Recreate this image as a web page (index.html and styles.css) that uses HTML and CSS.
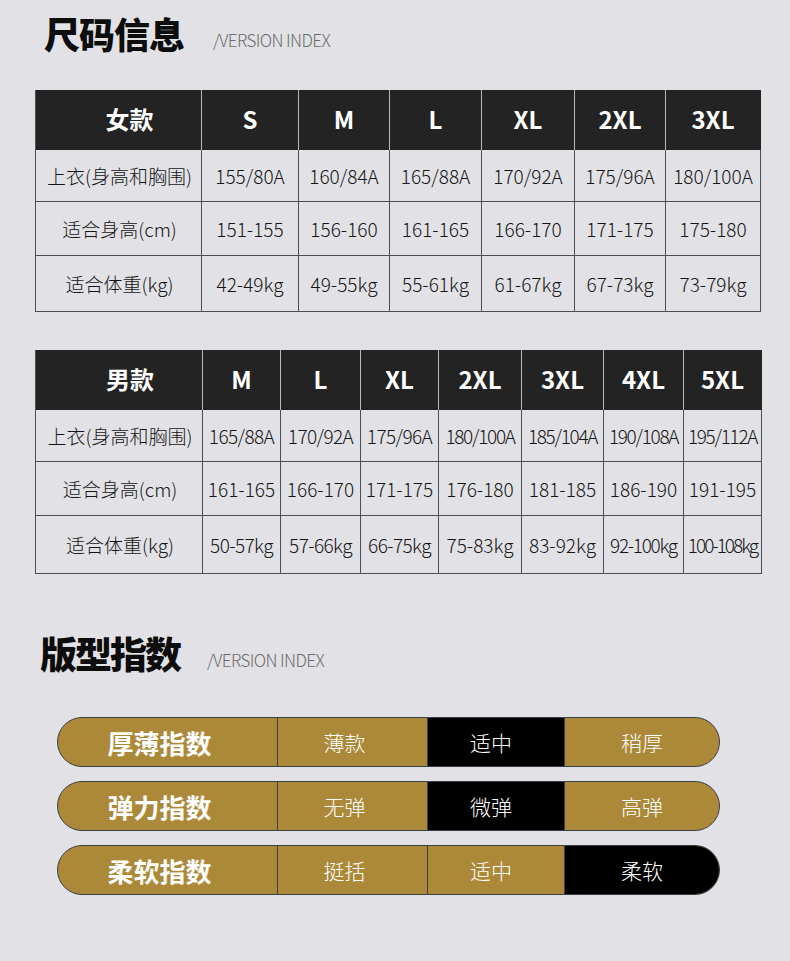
FILE: index.html
```html
<!DOCTYPE html>
<html lang="zh">
<head>
<meta charset="utf-8">
<title>尺码信息</title>
<link rel="stylesheet" href="styles.css">
</head>
<body>
<section class="head head-size">
  <h1 class="title">尺码信息</h1>
  <span class="sub">/VERSION INDEX</span>
</section>

<table class="size women">
  <colgroup>
    <col class="w-label"><col class="w97"><col class="w91"><col class="w92"><col class="w93"><col class="w91"><col class="w95">
  </colgroup>
  <thead>
    <tr><th>女款</th><th>S</th><th>M</th><th>L</th><th>XL</th><th>2XL</th><th>3XL</th></tr>
  </thead>
  <tbody>
    <tr class="r1"><td>上衣(身高和胸围)</td><td>155/80A</td><td>160/84A</td><td>165/88A</td><td>170/92A</td><td>175/96A</td><td>180/100A</td></tr>
    <tr class="r2"><td>适合身高(cm)</td><td>151-155</td><td>156-160</td><td>161-165</td><td>166-170</td><td>171-175</td><td>175-180</td></tr>
    <tr class="r3"><td>适合体重(kg)</td><td>42-49kg</td><td>49-55kg</td><td>55-61kg</td><td>61-67kg</td><td>67-73kg</td><td>73-79kg</td></tr>
  </tbody>
</table>

<table class="size men">
  <colgroup>
    <col class="w-label2"><col class="w78"><col class="w80"><col class="w78"><col class="w83"><col class="w82"><col class="w80"><col class="w78">
  </colgroup>
  <thead>
    <tr><th>男款</th><th>M</th><th>L</th><th>XL</th><th>2XL</th><th>3XL</th><th>4XL</th><th>5XL</th></tr>
  </thead>
  <tbody>
    <tr class="r1"><td>上衣(身高和胸围)</td><td class="t1">165/88A</td><td class="t1">170/92A</td><td class="t1">175/96A</td><td class="t2">180/100A</td><td class="t2">185/104A</td><td class="t2">190/108A</td><td class="t2">195/112A</td></tr>
    <tr class="r2"><td>适合身高(cm)</td><td>161-165</td><td>166-170</td><td>171-175</td><td>176-180</td><td>181-185</td><td>186-190</td><td>191-195</td></tr>
    <tr class="r3"><td>适合体重(kg)</td><td class="t1">50-57kg</td><td class="t1">57-66kg</td><td class="t1">66-75kg</td><td>75-83kg</td><td>83-92kg</td><td class="t2">92-100kg</td><td class="t3">100-108kg</td></tr>
  </tbody>
</table>

<section class="head head-fit">
  <h1 class="title">版型指数</h1>
  <span class="sub">/VERSION INDEX</span>
</section>

<div class="pills">
  <div class="pill">
    <div class="seg lab">厚薄指数</div>
    <div class="seg o1">薄款</div>
    <div class="seg o2 on">适中</div>
    <div class="seg o3">稍厚</div>
  </div>
  <div class="pill">
    <div class="seg lab">弹力指数</div>
    <div class="seg o1">无弹</div>
    <div class="seg o2 on">微弹</div>
    <div class="seg o3">高弹</div>
  </div>
  <div class="pill">
    <div class="seg lab">柔软指数</div>
    <div class="seg o1">挺括</div>
    <div class="seg o2">适中</div>
    <div class="seg o3 on">柔软</div>
  </div>
</div>
</body>
</html>
```

FILE: styles.css
```css
* { box-sizing: border-box; }
html, body { margin: 0; padding: 0; }
body {
  background: #e2e2e6;
  width: 790px;
  height: 961px;
  font-family: "Noto Sans CJK SC", "Noto Sans", sans-serif;
  color: #222;
  overflow: hidden;
}

.head {
  display: flex;
  align-items: baseline;
}
.head-size { padding: 13px 0 0 44px; height: 90px; }
.head-fit { padding: 0 0 0 40px; margin-top: 59px; height: 84px; }

.title {
  margin: 0;
  font-size: 36px;
  line-height: 40px;
  font-weight: 900;
  color: #0d0d0d;
  letter-spacing: -1px;
}
.head-fit .title { font-size: 37px; letter-spacing: -2px; }
.sub {
  margin-left: 29px;
  font-size: 17px;
  font-weight: 300;
  color: #6b6b6b;
  letter-spacing: -0.6px;
  position: relative;
  top: -2px;
}
.head-fit .sub { margin-left: 27px; }

.size {
  margin-left: 35px;
  border-collapse: separate;
  border-spacing: 0;
  table-layout: fixed;
  border-left: 1px solid #4a4f57;
}
.women { width: 725px; }
.men { width: 726px; margin-top: 38px; }

.w-label { width: 166px; }
.w-label2 { width: 167px; }
.w97 { width: 97px; }
.w91 { width: 91px; }
.w92 { width: 92px; }
.w93 { width: 93px; }
.w95 { width: 95px; }
.w78 { width: 78px; }
.w80 { width: 80px; }
.w82 { width: 82px; }
.w83 { width: 83px; }

.size th {
  background: #232323;
  color: #fff;
  font-size: 24px;
  font-weight: 700;
  height: 60px;
  padding: 0 0 3px;
  border-right: 1px solid #b9b9bd;
  vertical-align: middle;
}
.size th:last-child { border-right: 1px solid #232323; }
.size th:first-child { padding-left: 22px; }

.size td {
  padding: 0;
  text-align: center;
  vertical-align: middle;
  font-size: 19px;
  font-weight: 300;
  color: #151515;
  border-right: 1px solid #4a4f57;
  border-bottom: 1px solid #4a4f57;
  white-space: nowrap;
  overflow: visible;
}
.size td:first-child { font-size: 19px; padding-left: 2px; }
.r1 td { height: 52px; }
.r2 td { height: 54px; }
.r3 td { height: 56px; }
.men .r3 td { height: 58px; }

.men .t1 { letter-spacing: -0.6px; }
.men .t2 { letter-spacing: -1.3px; }
.men .t3 { letter-spacing: -2px; }

.pills {
  margin-left: 57px;
  display: flex;
  flex-direction: column;
  gap: 14px;
}
.pill {
  width: 663px;
  height: 50px;
  display: flex;
  border: 1px solid #3b4048;
  border-radius: 25px;
  overflow: hidden;
  background: #ac8938;
}
.seg {
  display: flex;
  align-items: center;
  justify-content: center;
  color: #fff;
  font-size: 21px;
  font-weight: 300;
  border-left: 1px solid #3b4048;
}
.seg.lab {
  width: 219px;
  border-left: 0;
  font-size: 26px;
  font-weight: 700;
  padding-right: 16px;
}
.o1 { width: 150px; padding-right: 16px; }
.o2 { width: 137px; padding-right: 10px; }
.o3 { flex: 1; }
.seg.on { background: #000; }
```
